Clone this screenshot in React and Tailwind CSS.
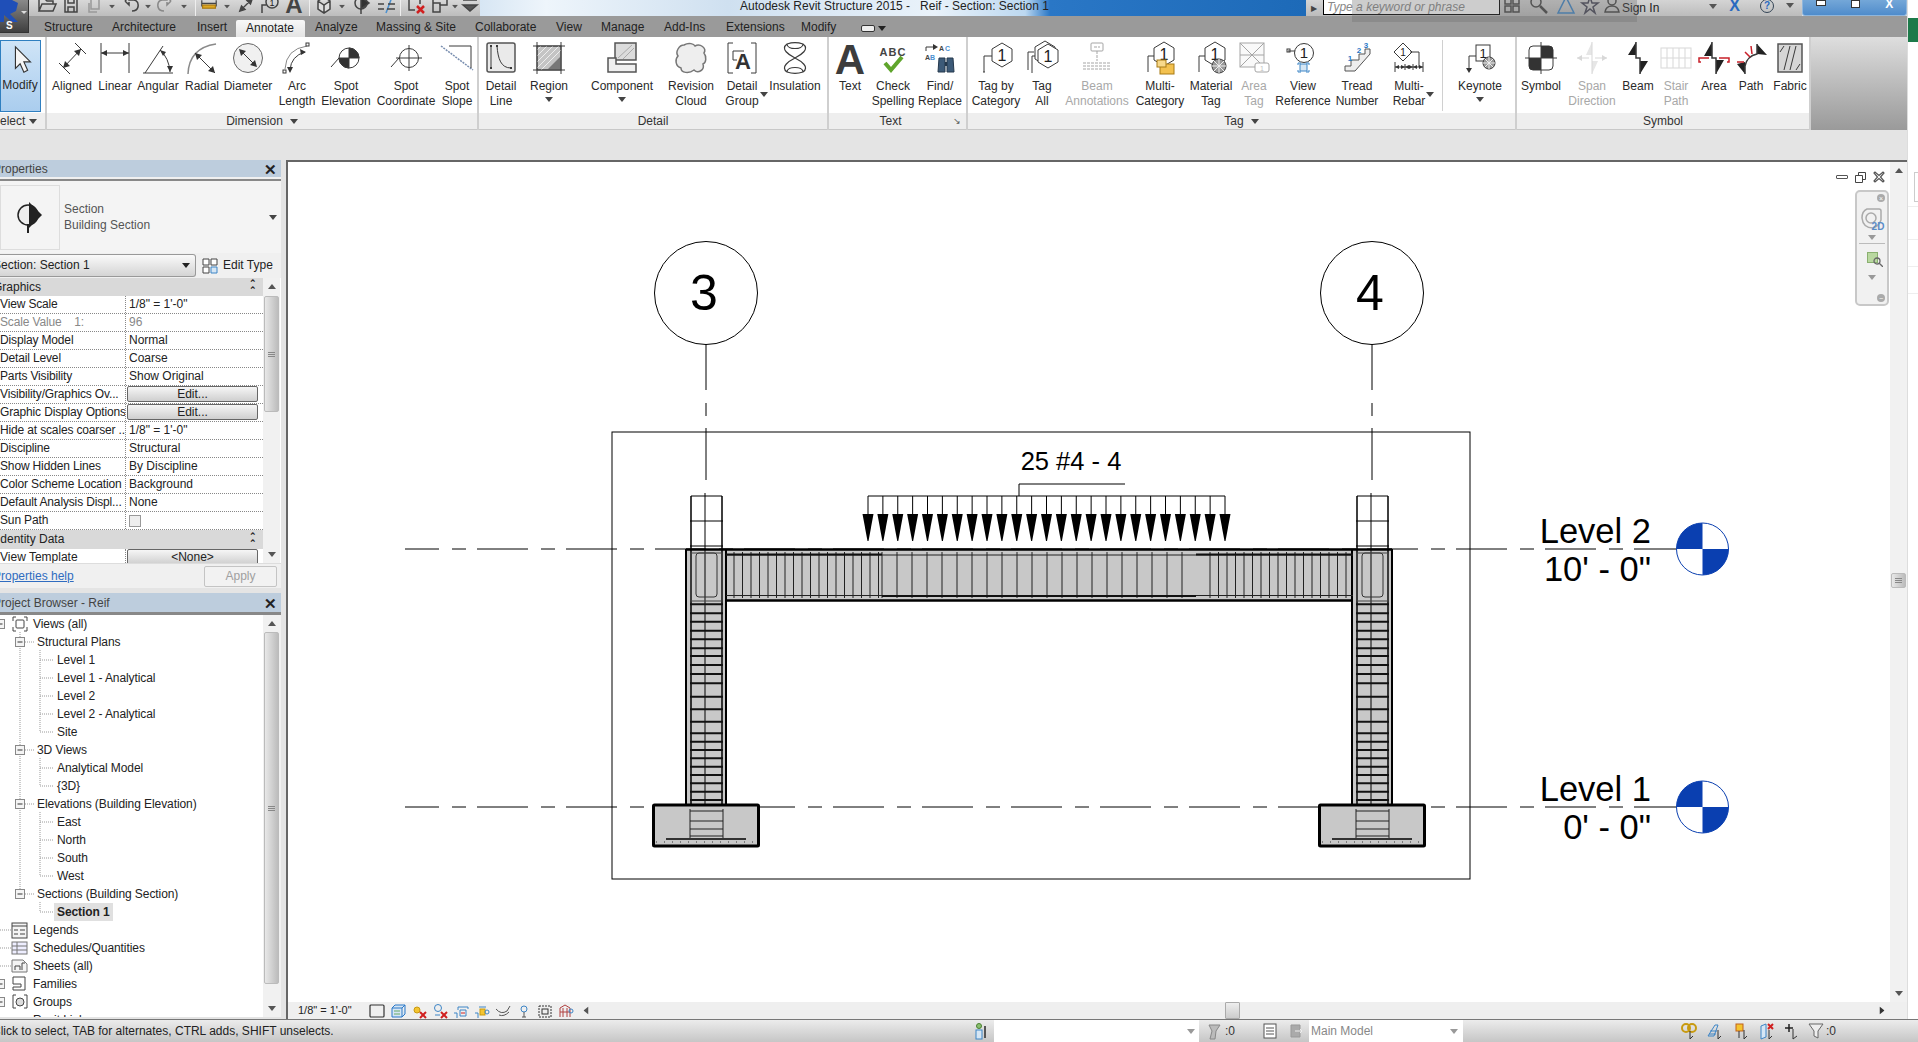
import React from "react";

const range = (from, to, step) => {
  const out = [];
  for (let v = from; v <= to; v += step) out.push(v);
  return out;
};

// small building blocks for the ribbon glyphs
const Head = ({ d }) => <path d={d} fill="#333" stroke="none" />;
const Hex = ({ x = 22, y = 13, n = "1" }) => (
  <g>
    <polygon points={`${x},${y - 12} ${x + 10},${y - 6} ${x + 10},${y + 6} ${x},${y + 12} ${x - 10},${y + 6} ${x - 10},${y - 6}`} fill="#fff" />
    <text x={x} y={y + 6} textAnchor="middle" fontSize="16" fill="#222" stroke="none">{n}</text>
  </g>
);
const Ball = ({ x, y, r = 6 }) => (
  <g>
    <circle cx={x} cy={y} r={r} fill="#999" />
    <path d={`M${x - r} ${y}H${x + r}M${x} ${y - r}V${y + r}M${x - r + 2} ${y - r + 2}L${x + r - 2} ${y + r - 2}M${x + r - 2} ${y - r + 2}L${x - r + 2} ${y + r - 2}`} stroke="#eee" />
  </g>
);
const Folder = ({ x, y }) => (
  <g>
    <rect x={x} y={y} width="14" height="10" fill="#f3c14f" stroke="#a87a14" />
    <rect x={x - 3} y={y - 4} width="9" height="7" fill="#f8d98a" stroke="#a87a14" />
  </g>
);

const ICONS = {
  aligned: (
    <g>
      <path d="M3 21L14 32M19 1L30 12M7 26L25 7" />
      <Head d="M7 26l2-7 5 5zM25 7l-7 2 5 5z" />
    </g>
  ),
  linear: (
    <g>
      <path d="M2 1V31M30 1V31M2 11H30" />
      <Head d="M2 11l6-3v6zM30 11l-6-3v6z" />
    </g>
  ),
  angular: (
    <g>
      <path d="M1 31H31M3 31L21 4M18 8Q27 16 28 30" />
      <Head d="M18 8l6 2-3 4zM28 30l-3-6h6z" />
    </g>
  ),
  radial: (
    <g>
      <path d="M2 32Q3 6 30 2" stroke="#8a8a8a" strokeWidth="1.5" />
      <path d="M9 11L29 31" />
      <Head d="M9 11l7 2-5 5zM29 31l-7-2 5-5z" />
    </g>
  ),
  diameter: (
    <g>
      <circle cx="16" cy="16" r="14.5" fill="#f0f0f0" stroke="#666" />
      <path d="M8 8L24 24" />
      <Head d="M7 7l7 2-5 5zM25 25l-7-2 5-5z" />
    </g>
  ),
  arc: (
    <g>
      <path d="M4 27Q5 7 26 4" stroke="#888" />
      <path d="M9 28Q10 14 24 10" />
      <Head d="M25 10l-6-3 1 6zM9 31l-3-6h6z" />
      <rect x="25" y="1" width="3" height="3" fill="#fff" />
      <rect x="2" y="28" width="3" height="3" fill="#fff" />
    </g>
  ),
  spotElev: (
    <g>
      <path d="M1 25L9 16H29" />
      <circle cx="19" cy="16" r="10" fill="#fff" />
      <path d="M19 6A10 10 0 0 1 29 16H19zM19 26A10 10 0 0 1 9 16H19z" fill="#333" />
    </g>
  ),
  spotCoord: (
    <g>
      <path d="M1 25L9 16" />
      <circle cx="19" cy="16" r="9.5" />
      <path d="M19 3V29M6 16H32" />
    </g>
  ),
  spotSlope: (
    <g>
      <path d="M0 4L32 28" stroke="#7a8fb0" strokeDasharray="2 1" strokeWidth="1.5" />
      <path d="M8 4H30V26" />
    </g>
  ),
  detailLine: (
    <g>
      <rect x="2" y="1" width="28" height="29" rx="2" fill="#eaeaea" stroke="#555" strokeWidth="1.5" />
      <path d="M6 4V26M12 4C13 17 16 26 26 26" />
      <path d="M5 4h2M11 4h2M5 26h2M25 26h2" strokeWidth="2" />
    </g>
  ),
  region: (
    <g>
      <rect x="4" y="4" width="24" height="24" fill="#c4c4c4" />
      <path d="M8 4L4 8M14 4L4 14M20 4L4 20M26 4L4 26M28 8L8 28" stroke="#eee" />
      <path d="M28 14V28H14z" fill="#777" stroke="none" />
      <path d="M0 4H32M0 28H32M4 0V32M28 0V32" />
    </g>
  ),
  component: (
    <g>
      <rect x="9" y="1" width="21" height="17" fill="#dcdcdc" stroke="#555" strokeWidth="1.5" />
      <path d="M2 20V30H30V22H10V16H2z" fill="#efefef" stroke="#555" strokeWidth="1.5" />
      <path d="M12 16L26 3M17 17L28 6" stroke="#aaa" />
    </g>
  ),
  cloud: (
    <path d="M9 3C14 0 19 2 20 4C25 1 32 6 29 11C32 15 31 21 28 22C30 28 23 32 19 28C14 32 6 31 6 26C0 24 0 17 3 14C0 10 4 3 9 3z" fill="#eee" stroke="#777" strokeWidth="1.5" />
  ),
  detailGroup: (
    <g>
      <path d="M7 1H2V31H7M25 1H30V31H25" />
      <path d="M7 9H18" />
      <path d="M7 9V18H11" />
      <text x="17" y="27" textAnchor="middle" fontSize="22" fontWeight="700" fill="#333" stroke="none">A</text>
    </g>
  ),
  insulation: (
    <path d="M8 2C14 0 18 0 24 2C31 7 22 13 16 16C22 19 31 25 24 30C18 32 14 32 8 30C1 25 10 19 16 16C10 13 1 7 8 2z M8 2C8 8 24 8 24 2M8 30C8 24 24 24 24 30" strokeWidth="1.2" />
  ),
  textA: <text x="16" y="32" textAnchor="middle" fontSize="42" fontWeight="700" fill="#3c3c3c" stroke="none">A</text>,
  check: (
    <g>
      <text x="16" y="14" textAnchor="middle" fontSize="11" fontWeight="700" letterSpacing="1" fill="#444" stroke="none">ABC</text>
      <path d="M8 21L14 28L25 15" stroke="#5fa52c" strokeWidth="4" />
    </g>
  ),
  find: (
    <g>
      <path d="M2 9V5H10" />
      <Head d="M14 5l-5-3v6z" />
      <text x="15" y="9" fontSize="7" fontWeight="700" fill="#444" stroke="none">A</text>
      <text x="21" y="9" fontSize="7" fontWeight="700" fill="#4a90d0" stroke="none">C</text>
      <text x="1" y="18" fontSize="7" fontWeight="700" fill="#444" stroke="none">A</text>
      <text x="6" y="18" fontSize="7" fontWeight="700" fill="#4a90d0" stroke="none">B</text>
      <path d="M15 16h6v14h-7zM23 16h6l1 14h-7z" fill="#3c5a78" stroke="#24384c" />
      <path d="M21 20h2v4h-2z" fill="#24384c" stroke="none" />
    </g>
  ),
  tag: (
    <g>
      <path d="M4 30V14H14M3 30h2" />
      <Hex />
    </g>
  ),
  tagAll: (
    <g>
      <path d="M2 28V10H8M6 31V14H12" />
      <Hex x={19} y={11} />
      <Hex x={22} y={14} />
    </g>
  ),
  beamAnno: (
    <g>
      <rect x="10" y="1" width="12" height="8" rx="1" />
      <path d="M13 5h6M16 9v10M2 21H30M2 27H30M2 24H30" strokeDasharray="3 1" />
    </g>
  ),
  multi: (
    <g>
      <path d="M4 30V14H14" />
      <Hex x={20} y={12} />
      <Folder x={16} y={22} />
    </g>
  ),
  material: (
    <g>
      <path d="M4 30V14H14" />
      <Hex x={20} y={12} />
      <Ball x={24} y={24} r={7} />
    </g>
  ),
  area: (
    <g>
      <rect x="2" y="1" width="24" height="24" fill="#f2f2f2" />
      <path d="M2 1L26 25M26 1L2 25M2 13H26" />
      <rect x="17" y="21" width="14" height="9" rx="2" fill="#fff" />
      <text x="24" y="29" textAnchor="middle" fontSize="7" fill="#777" stroke="none">1</text>
    </g>
  ),
  viewRef: (
    <g>
      <path d="M1 9H8" />
      <rect x="0" y="7" width="3" height="3" />
      <circle cx="17" cy="11" r="9.5" fill="#fff" />
      <text x="17" y="16" textAnchor="middle" fontSize="15" fill="#222" stroke="none">1</text>
      <path d="M11 23v-2h3M19 21h3v2M11 28v2h3M19 30h3v-2" stroke="#3d85c6" />
      <rect x="13" y="22" width="7" height="7" fill="#d6e6f4" stroke="#3d85c6" />
    </g>
  ),
  tread: (
    <g>
      <path d="M4 29V24H10V18H18V12H24V7H29V12L14 29z" fill="#eee" stroke="#555" />
      <text x="9" y="19" textAnchor="middle" fontSize="8" fontWeight="700" fill="#2a78c8" stroke="none">1</text>
      <text x="18" y="11" textAnchor="middle" fontSize="8" fontWeight="700" fill="#2a78c8" stroke="none">2</text>
      <text x="25" y="6" textAnchor="middle" fontSize="8" fontWeight="700" fill="#2a78c8" stroke="none">3</text>
    </g>
  ),
  multiRebar: (
    <g>
      <polygon points="10,1 19,10 10,19 1,10" fill="#fff" />
      <text x="10" y="14" textAnchor="middle" fontSize="10" fill="#222" stroke="none">1</text>
      <path d="M17 10H26V25M2 20V30M30 20V30M12 22V28M20 22V28M2 25H30" />
      <Head d="M2 25l4-2v4zM12 25l-4-2v4zM12 25l4-2v4zM20 25l-4-2v4zM20 25l4-2v4zM30 25l-4-2v4z" />
    </g>
  ),
  keynote: (
    <g>
      <path d="M5 28V14H14" />
      <Head d="M5 31l-3-5h6z" />
      <rect x="12" y="3" width="14" height="16" fill="#fff" />
      <text x="19" y="16" textAnchor="middle" fontSize="13" fill="#222" stroke="none">1</text>
      <Ball x={25} y={21} r={6} />
    </g>
  ),
  symbol: (
    <g>
      <rect x="4" y="4" width="24" height="24" rx="4" fill="#fff" />
      <path d="M16 4H24Q28 4 28 8V16H16zM16 28H8Q4 28 4 24V16H16z" fill="#333" stroke="none" />
      <path d="M16 0V32M0 16H32" />
    </g>
  ),
  span: (
    <g stroke="#aaa">
      <path d="M16 0L10 13H16zM16 32L22 19H16z" fill="#c8c8c8" stroke="none" />
      <path d="M16 0V32M1 16H13M19 16H31" />
      <path d="M1 16l5-3v6zM31 16l-5-3v6z" fill="#aaa" stroke="none" />
    </g>
  ),
  beam: (
    <g>
      <path d="M14 0L6 13H14zM18 32L26 19H18z" fill="#222" stroke="none" />
      <path d="M14 0V16H18V32" strokeWidth="1.5" />
    </g>
  ),
  stairPath: (
    <g stroke="#aaa">
      <rect x="1" y="6" width="30" height="20" />
      <path d="M1 16H31M7 6V26M13 6V26M19 6V26M25 6V26" />
    </g>
  ),
  areaSym: (
    <g>
      <path d="M14 0L6 14H14zM18 32L26 18H18z" fill="#222" stroke="none" />
      <path d="M14 0V16H18V32" strokeWidth="1.5" />
      <path d="M11 16H1V20H3M21 16H31V20H29" stroke="#c8202a" strokeWidth="1.5" />
    </g>
  ),
  pathSym: (
    <g>
      <path d="M22 2V12L32 13zM10 32V20L2 22z" fill="#222" stroke="none" />
      <path d="M22 2V12Q12 14 10 24V32" strokeWidth="1.5" />
      <path d="M16 4L17 12M10 10L15 15M2 20H9" stroke="#c8202a" strokeWidth="1.5" />
    </g>
  ),
  fabric: (
    <g>
      <rect x="4" y="2" width="24" height="28" fill="#d6d6d6" stroke="#555" strokeWidth="1.5" />
      <path d="M10 28L16 4M16 28L22 4M6 10L10 4M22 28L26 22" />
    </g>
  ),
};

const Icon = ({ name, faded }) => (
  <svg viewBox="0 0 32 32" fill="none" stroke="#3a3a3a" strokeWidth="1" className={`h-[32px] w-[32px] overflow-visible ${faded ? "opacity-45" : ""}`}>
    {ICONS[name]}
  </svg>
);

const Caret = ({ color = "#444", className = "" }) => (
  <svg viewBox="0 0 8 5" className={`h-[5px] w-[8px] shrink-0 ${className}`}>
    <path d="M0 0H8L4 5z" fill={color} />
  </svg>
);

const RibbonBtn = ({ w, icon, lines, faded, drop }) => (
  <div className={`${w} flex h-full shrink-0 flex-col items-center pt-[5px] text-center`}>
    <Icon name={icon} faded={faded} />
    <div className={`relative mt-[5px] whitespace-nowrap leading-[15px] ${faded ? "text-[#a8a8a8]" : "text-[#2a2a2a]"}`}>
      {lines.map((l) => (
        <div key={l}>{l}</div>
      ))}
      {drop === "below" && <Caret className="mx-auto mt-[3px]" />}
      {drop === "side" && <Caret className="absolute -right-[9px] top-[13px]" />}
    </div>
  </div>
);

const PANELS = [
  {
    w: "w-[432px]", label: "Dimension", caret: true,
    btns: [
      { w: "w-[50px]", icon: "aligned", lines: ["Aligned"] },
      { w: "w-[36px]", icon: "linear", lines: ["Linear"] },
      { w: "w-[50px]", icon: "angular", lines: ["Angular"] },
      { w: "w-[38px]", icon: "radial", lines: ["Radial"] },
      { w: "w-[54px]", icon: "diameter", lines: ["Diameter"] },
      { w: "w-[44px]", icon: "arc", lines: ["Arc", "Length"] },
      { w: "w-[54px]", icon: "spotElev", lines: ["Spot", "Elevation"] },
      { w: "w-[66px]", icon: "spotCoord", lines: ["Spot", "Coordinate"] },
      { w: "w-[36px]", icon: "spotSlope", lines: ["Spot", "Slope"] },
    ],
  },
  {
    w: "w-[350px]", label: "Detail",
    btns: [
      { w: "w-[44px]", icon: "detailLine", lines: ["Detail", "Line"] },
      { w: "w-[52px]", icon: "region", lines: ["Region"], drop: "below" },
      { w: "w-[94px]", icon: "component", lines: ["Component"], drop: "below" },
      { w: "w-[44px]", icon: "cloud", lines: ["Revision", "Cloud"] },
      { w: "w-[58px]", icon: "detailGroup", lines: ["Detail", "Group"], drop: "side" },
      { w: "w-[48px]", icon: "insulation", lines: ["Insulation"] },
    ],
  },
  {
    w: "w-[139px]", label: "Text", corner: true,
    btns: [
      { w: "w-[42px]", icon: "textA", lines: ["Text"] },
      { w: "w-[44px]", icon: "check", lines: ["Check", "Spelling"] },
      { w: "w-[50px]", icon: "find", lines: ["Find/", "Replace"] },
    ],
  },
  {
    w: "w-[549px]", label: "Tag", caret: true,
    btns: [
      { w: "w-[56px]", icon: "tag", lines: ["Tag by", "Category"] },
      { w: "w-[36px]", icon: "tagAll", lines: ["Tag", "All"] },
      { w: "w-[74px]", icon: "beamAnno", lines: ["Beam", "Annotations"], faded: true },
      { w: "w-[52px]", icon: "multi", lines: ["Multi-", "Category"] },
      { w: "w-[50px]", icon: "material", lines: ["Material", "Tag"] },
      { w: "w-[36px]", icon: "area", lines: ["Area", "Tag"], faded: true },
      { w: "w-[62px]", icon: "viewRef", lines: ["View", "Reference"] },
      { w: "w-[46px]", icon: "tread", lines: ["Tread", "Number"] },
      { w: "w-[58px]", icon: "multiRebar", lines: ["Multi-", "Rebar"], drop: "side" },
      { sep: true },
      { w: "w-[66px]", icon: "keynote", lines: ["Keynote"], drop: "below" },
    ],
  },
  {
    w: "w-[294px]", label: "Symbol",
    btns: [
      { w: "w-[48px]", icon: "symbol", lines: ["Symbol"] },
      { w: "w-[54px]", icon: "span", lines: ["Span", "Direction"], faded: true },
      { w: "w-[38px]", icon: "beam", lines: ["Beam"] },
      { w: "w-[38px]", icon: "stairPath", lines: ["Stair", "Path"], faded: true },
      { w: "w-[38px]", icon: "areaSym", lines: ["Area"] },
      { w: "w-[36px]", icon: "pathSym", lines: ["Path"] },
      { w: "w-[42px]", icon: "fabric", lines: ["Fabric"] },
    ],
  },
];

const RibbonPanel = ({ panel }) => (
  <div className={`${panel.w} flex shrink-0 flex-col border-r-2 border-[#cfcfcf]`}>
    <div className="flex h-[76px] bg-white">
      {panel.btns.map((b, i) =>
        b.sep ? (
          <div key={i} className="mx-[4px] mt-[3px] mb-[2px] w-px shrink-0 bg-[#d0d0d0]" />
        ) : (
          <RibbonBtn key={b.icon} {...b} />
        )
      )}
    </div>
    <div className={`relative flex h-[17px] items-center justify-center gap-[7px] border-b border-[#c8c8c8] bg-[#eeeeee] pt-[1px] text-[#333] ${panel.corner ? "pr-[14px]" : ""}`}>
      {panel.label}
      {panel.caret && <Caret />}
      {panel.corner && <span className="absolute right-[5px] bottom-0 text-[9px] text-[#555]">↘</span>}
    </div>
  </div>
);

const TABS = [
  ["Structure", "w-[68px]"], ["Architecture", "w-[85px]"], ["Insert", "w-[49px]"], ["Annotate", "w-[69px]"],
  ["Analyze", "w-[61px]"], ["Massing & Site", "w-[99px]"], ["Collaborate", "w-[81px]"], ["View", "w-[45px]"],
  ["Manage", "w-[63px]"], ["Add-Ins", "w-[62px]"], ["Extensions", "w-[75px]"], ["Modify", "w-[70px]"],
];

const Qs = ({ children, w = "w-[24px]" }) => (
  <svg viewBox="0 0 20 20" fill="none" stroke="#444" strokeWidth="1.5" className={`${w} -mt-[7px] h-[20px] shrink-0`}>
    {children}
  </svg>
);
const QCaret = ({ w }) => (
  <div className={`${w} flex shrink-0 justify-center`}>
    <Caret color="#555" className="-mt-[4px] scale-75" />
  </div>
);
const QSep = ({ w }) => (
  <div className={`${w} flex h-[16px] shrink-0 justify-center`}>
    <div className="h-[16px] w-px bg-[#eee]" />
  </div>
);

const TitleBar = () => (
  <div className="relative flex h-[16px] shrink-0 text-[#222]">
    <div className="flex w-[480px] items-center overflow-hidden bg-gradient-to-b from-[#d8d8d8] to-[#bdbdbd] pl-[35px]">
      <Qs><path d="M2 16V4H8L10 6H16V9M2 16L5 9H19L16 16z" /></Qs>
      <Qs><path d="M4 3H16V17H4zM7 3V8H13V3M7 17V12H13V17" /></Qs>
      <Qs><path d="M6 4H14V14H6zM4 8V17H12" stroke="#999" /></Qs>
      <QCaret w="w-[10px]" />
      <Qs w="w-[28px]"><path d="M4 6L8 2V5H13Q18 6 17 12Q16 16 11 16M4 6L8 10V7" /></Qs>
      <QCaret w="w-[6px]" />
      <Qs w="w-[28px]"><path d="M16 6L12 2V5H7Q2 6 3 12Q4 16 9 16M16 6L12 10V7" stroke="#888" /></Qs>
      <QCaret w="w-[10px]" />
      <QSep w="w-[12px]" />
      <Qs w="w-[16px]"><path d="M1 4V12M19 4V12M1 8H19" /><rect x="2" y="10" width="16" height="4" fill="#e0a820" stroke="#a87a14" /></Qs>
      <QCaret w="w-[20px]" />
      <Qs w="w-[18px]"><path d="M3 17L17 3M3 17l2-6 4 4zM17 3l-6 2 4 4z" fill="#444" /></Qs>
      <Qs w="w-[28px]"><circle cx="13" cy="7" r="6" /><path d="M3 18V10H7" /><text x="13" y="11" fontSize="9" textAnchor="middle" fill="#222" stroke="none">1</text></Qs>
      <span className="-mt-[6px] w-[22px] shrink-0 text-center text-[24px] leading-[20px] font-bold text-[#444]">A</span>
      <QSep w="w-[8px]" />
      <Qs w="w-[22px]"><path d="M4 6L10 2L16 6V14L10 18L4 14zM4 6L10 10L16 6M10 10V18" fill="#ddd" /></Qs>
      <QCaret w="w-[14px]" />
      <Qs w="w-[26px]"><circle cx="9" cy="8" r="6" /><path d="M9 2L17 8L9 14z" fill="#333" /><path d="M9 14V19" /></Qs>
      <Qs w="w-[22px]"><path d="M2 4H8M2 9H8M2 14H8" /><path d="M10 18L16 2" stroke="#4a90d0" /><path d="M12 9H19M11 14H19" /></Qs>
      <QSep w="w-[6px]" />
      <Qs w="w-[26px]"><path d="M3 3H14V9M3 3V15H9" /><path d="M11 11L18 18M18 11L11 18" stroke="#d02020" strokeWidth="2.5" /></Qs>
      <Qs w="w-[22px]"><path d="M3 3H17V10H10V17H3z" /><path d="M3 8H10V10" /></Qs>
      <QCaret w="w-[8px]" />
      <Qs w="w-[22px]"><path d="M3 5H17M3 10L10 16L17 10H3z" fill="#555" /></Qs>
    </div>
    <div className="flex w-[826px] justify-start bg-[linear-gradient(90deg,#d7e6f4_0%,#eef5fb_8%,#cfe0f0_30%,#e9f2fa_55%,#bcd8f0_66%,#2a77c6_69%,#1d6ab8_100%)] pl-[260px] text-[12px] leading-[13px] whitespace-pre">
      Autodesk Revit Structure 2015 -{"   "}Reif - Section: Section 1
    </div>
    <div className="flex w-[496px] items-center overflow-hidden bg-gradient-to-b from-[#d4d4d4] to-[#bcbcbc]">
      <span className="ml-[5px] text-[8px] text-[#444]">▶</span>
      <div className="ml-[6px] h-[16px] w-[177px] shrink-0 -translate-y-[1px] border border-black bg-white px-[3px] text-[12px] leading-[14px] text-[#888] italic">
        Type a keyword or phrase
      </div>
      <Qs w="w-[24px]"><path d="M3 3H9V9H3zM11 3H17V9H11zM3 11H9V17H3zM11 11H17V17H11z" /></Qs>
      <Qs w="w-[30px]"><circle cx="7" cy="7" r="5" /><path d="M11 11L18 18" strokeWidth="2.5" /></Qs>
      <Qs w="w-[24px]"><path d="M10 2L18 18H2z" stroke="#3d85c6" /></Qs>
      <Qs w="w-[24px]"><path d="M10 2L12 8H18L13 12L15 18L10 14L5 18L7 12L2 8H8z" stroke="#445" /></Qs>
      <Qs w="w-[20px]"><circle cx="10" cy="6" r="4" /><path d="M3 17Q4 11 10 11Q16 11 17 17z" /></Qs>
      <span className="shrink-0 text-[12px] leading-[12px] text-[#222]">Sign In</span>
      <Caret color="#555" className="ml-[50px] -mt-[4px]" />
      <span className="ml-[12px] -mt-[4px] text-[16px] leading-[16px] font-bold text-[#2a6ac0]">X</span>
      <div className="ml-[20px] flex h-[16px] items-center">
        <span className="-mt-[5px] flex h-[14px] w-[14px] items-center justify-center rounded-full border border-[#345] text-[10px] font-bold text-[#2a6ac0]">?</span>
        <Caret color="#555" className="ml-[12px] -mt-[5px]" />
      </div>
    </div>
    <div className="flex w-[105px] items-start justify-around rounded-b-[3px] border border-t-0 border-[#8fb6dc] bg-gradient-to-b from-[#74a7d8] to-[#4f8ccb]">
      <span className="h-[6px] w-[10px] border border-[#333] bg-white" />
      <span className="h-[8px] w-[9px] border border-[#333] bg-white" />
      <span className="-mt-[2px] text-[12px] leading-[12px] font-bold text-white">X</span>
    </div>
    {/* translucent popup sliver sitting over the bar */}
    <div className="absolute top-0 left-[1352px] h-[22px] w-[285px] bg-[#707070]/35" />
  </div>
);

const AppButton = () => (
  <div className="absolute top-0 left-0 z-10 h-[33px] w-[29px] border-r border-b border-[#333] bg-gradient-to-b from-[#8a8a8a] to-[#3f3f3f]">
    <svg viewBox="0 0 29 33" className="absolute inset-0 h-[33px] w-[29px]">
      <path d="M0 0H12L18 3L16 11L10 14L18 22H12L4 15V22H0z" fill="#1f4fb8" />
      <path d="M21 11H27L24 14z" fill="#ddd" />
    </svg>
    <span className="absolute bottom-0 left-[6px] text-[10px] leading-[12px] font-bold text-white">S</span>
  </div>
);

const Ribbon = () => (
  <div className="flex h-[93px] shrink-0">
    <div className="flex w-[47px] shrink-0 flex-col border-r-2 border-[#cfcfcf]">
      <div className="h-[76px] bg-white pt-[3px]">
        <div className="flex h-[72px] w-[41px] flex-col items-center border border-[#2f7fc0] bg-gradient-to-b from-[#cfe4f7] to-[#aacdee] pt-[4px]">
          <svg viewBox="0 0 20 32" className="ml-[2px] h-[30px] w-[20px]">
            <path d="M3 2V25L8 20L12 29L16 27L12 18H19z" fill="#f5f5f5" stroke="#333" strokeWidth="1.2" />
          </svg>
          <span className="mt-[3px] -ml-[1px] text-[#2a2a2a]">Modify</span>
        </div>
      </div>
      <div className="flex h-[17px] items-center gap-[4px] overflow-hidden border-b border-[#c8c8c8] bg-[#eeeeee] pt-[1px] text-[#333]">
        <span className="-ml-[8px]">Select</span>
        <Caret />
      </div>
    </div>
    {PANELS.map((p) => (
      <RibbonPanel key={p.label} panel={p} />
    ))}
    <div className="flex-1 bg-gradient-to-b from-[#dedede] to-[#9a9a9a]" />
  </div>
);

const ROWS = [
  ["View Scale", `1/8" = 1'-0"`],
  ["Scale Value    1:", "96", "muted"],
  ["Display Model", "Normal"],
  ["Detail Level", "Coarse"],
  ["Parts Visibility", "Show Original"],
  ["Visibility/Graphics Ov...", "Edit...", "btn"],
  ["Graphic Display Options", "Edit...", "btn"],
  ["Hide at scales coarser ...", `1/8" = 1'-0"`],
  ["Discipline", "Structural"],
  ["Show Hidden Lines", "By Discipline"],
  ["Color Scheme Location", "Background"],
  ["Default Analysis Displ...", "None"],
  ["Sun Path", "", "check"],
];

const EditBtn = ({ label }) => (
  <div className="mx-[1px] flex h-[16px] w-[131px] items-center justify-center rounded-[2px] border-[1.5px] border-[#666] bg-gradient-to-b from-[#f6f6f6] to-[#cfcfcf] text-[#222]">
    {label}
  </div>
);

const ScrollBar = ({ arrows = true, thumbTop, thumbH }) => (
  <div className="relative h-full w-full bg-[#f1f1f1]">
    {arrows && <Caret color="#555" className="absolute top-[6px] left-[5px] rotate-180" />}
    {arrows && <Caret color="#555" className="absolute bottom-[6px] left-[5px]" />}
    <div className={`absolute left-[1px] flex w-[15px] items-center justify-center rounded-[2px] border border-[#bbb] bg-gradient-to-r from-[#e8e8e8] to-[#bcbcbc] ${thumbTop} ${thumbH}`}>
      <span className="block h-[5px] w-[7px] border-y border-[#888] bg-[linear-gradient(#0000_40%,#888_40%,#888_60%,#0000_60%)]" />
    </div>
  </div>
);

const SectionHeader = ({ label, h }) => (
  <div className={`flex ${h} items-center justify-between bg-[#d9d9d9] pr-[6px] font-normal text-[#222]`}>
    <span>{label}</span>
    <span className="text-[9px] leading-[7px] font-bold">
      ⌃<br />⌃
    </span>
  </div>
);

const Properties = () => (
  <div className="flex h-[428px] shrink-0 flex-col bg-[#f0f0f0]">
    <div className="flex h-[17px] items-center justify-between bg-[#bdcddd] pt-[1px] pr-[4px] text-[#444]">
      <span className="-ml-[7px]">Properties</span>
      <span className="text-[15px] leading-none font-bold text-[#222]">✕</span>
    </div>
    <div className="mt-[2px] h-[2px] bg-[#888]" />
    <div className="flex h-[72px] items-center bg-[#f4f4f4] pr-[4px]">
      <div className="flex h-[65px] w-[60px] items-center justify-center border border-[#ddd] bg-[#f4f4f4]">
        <svg viewBox="0 0 30 34" className="h-[34px] w-[30px]">
          <circle cx="13" cy="15" r="10" fill="#eee" stroke="#222" strokeWidth="1.5" />
          <path d="M14 2L27 15L14 28z" fill="#222" />
          <path d="M13 24V33" stroke="#222" strokeWidth="2" />
        </svg>
      </div>
      <div className="ml-[4px] flex-1 leading-[16px] text-[#555]">
        <div>Section</div>
        <div>Building Section</div>
      </div>
      <Caret />
    </div>
    <div className="flex h-[25px] items-center bg-[#f0f0f0]">
      <div className="flex h-[23px] w-[196px] items-center justify-between overflow-hidden rounded-r-[3px] border border-l-0 border-[#999] bg-gradient-to-b from-[#fafafa] to-[#d4d4d4] pr-[5px] text-[#222]">
        <span className="-ml-[7px]">Section: Section 1</span>
        <Caret color="#222" />
      </div>
      <svg viewBox="0 0 16 16" className="ml-[6px] h-[16px] w-[16px]" fill="#fff" stroke="#444">
        <path d="M1 1H7V7H1zM9 1H15V7H9zM1 9H7V15H1z" />
        <path d="M9 9H15V15H9z" fill="#d6e6f4" stroke="#3d85c6" />
      </svg>
      <span className="ml-[5px] text-[#222]">Edit Type</span>
    </div>
    <div className="flex min-h-0 flex-1 bg-white">
      <div className="h-full w-[263px] overflow-hidden">
        <SectionHeader label={<span className="-ml-[7px] block">Graphics</span>} h="h-[18px]" />
        {ROWS.map(([a, b, kind]) => (
          <div key={a} className="flex h-[18px] border-b border-dotted border-[#888]">
            <div className={`w-[126px] shrink-0 overflow-hidden border-r border-dotted border-[#888] leading-[17px] tracking-[-0.15px] whitespace-pre ${kind === "muted" ? "text-[#888]" : "text-[#222]"}`}>
              {a}
            </div>
            {kind === "btn" ? (
              <EditBtn label={b} />
            ) : kind === "check" ? (
              <div className="ml-[3px] mt-[3px] h-[12px] w-[12px] border border-[#999] bg-[#eee]" />
            ) : (
              <div className={`pl-[3px] leading-[17px] ${kind === "muted" ? "text-[#888]" : "text-[#222]"}`}>{b}</div>
            )}
          </div>
        ))}
        <SectionHeader label={<span className="-ml-[3px] block">Identity Data</span>} h="h-[19px]" />
        <div className="flex h-[14px] overflow-hidden">
          <div className="w-[126px] shrink-0 border-r border-dotted border-[#888] leading-[16px] text-[#222]">View Template</div>
          <EditBtn label="<None>" />
        </div>
      </div>
      <div className="w-[17px]">
        <ScrollBar thumbTop="top-[18px]" thumbH="h-[116px]" />
      </div>
    </div>
    <div className="flex h-[25px] items-center justify-between border-t border-[#ddd] bg-[#f0f0f0] pr-[4px]">
      <span className="-ml-[7px] text-[#2f6cc0] underline">Properties help</span>
      <div className="flex h-[21px] w-[73px] items-center justify-center rounded-[2px] border border-[#c4c4c4] bg-[#f2f2f2] text-[#a0a0a0]">Apply</div>
    </div>
  </div>
);

const TREE = [
  { t: "Views (all)", x: "pl-[33px]", icon: "views" },
  { t: "Structural Plans", x: "pl-[37px]" },
  { t: "Level 1", x: "pl-[57px]" },
  { t: "Level 1 - Analytical", x: "pl-[57px]" },
  { t: "Level 2", x: "pl-[57px]" },
  { t: "Level 2 - Analytical", x: "pl-[57px]" },
  { t: "Site", x: "pl-[57px]" },
  { t: "3D Views", x: "pl-[37px]" },
  { t: "Analytical Model", x: "pl-[57px]" },
  { t: "{3D}", x: "pl-[57px]" },
  { t: "Elevations (Building Elevation)", x: "pl-[37px]" },
  { t: "East", x: "pl-[57px]" },
  { t: "North", x: "pl-[57px]" },
  { t: "South", x: "pl-[57px]" },
  { t: "West", x: "pl-[57px]" },
  { t: "Sections (Building Section)", x: "pl-[37px]" },
  { t: "Section 1", x: "pl-[54px]", active: true },
  { t: "Legends", x: "pl-[33px]" },
  { t: "Schedules/Quantities", x: "pl-[33px]" },
  { t: "Sheets (all)", x: "pl-[33px]" },
  { t: "Families", x: "pl-[33px]" },
  { t: "Groups", x: "pl-[33px]" },
  { t: "Revit Links", x: "pl-[33px]" },
];

const PlusBox = ({ x, y }) => (
  <g>
    <rect x={x - 4.5} y={y - 4.5} width="9" height="9" fill="#f4f4f4" stroke="#888" />
    <path d={`M${x - 2.5} ${y}H${x + 2.5}`} stroke="#333" />
  </g>
);

// connector lines and small node icons of the browser tree, y measured from the top of the tree
const TreeLines = () => {
  const r = (i) => 9 + i * 18;
  return (
    <svg className="absolute top-0 left-0 h-[402px] w-[54px]" viewBox="0 0 54 402" fill="none" stroke="#999" strokeDasharray="1 1">
      <path d={`M20 ${r(0) + 8}V${r(15)}`} />
      {[1, 7, 10, 15].map((i) => (
        <path key={i} d={`M25 ${r(i)}H35`} />
      ))}
      <path d={`M40 ${r(1) + 8}V${r(6)}M40 ${r(7) + 8}V${r(9)}M40 ${r(10) + 8}V${r(14)}M40 ${r(15) + 8}V${r(16)}`} />
      {[2, 3, 4, 5, 6, 8, 9, 11, 12, 13, 14, 16].map((i) => (
        <path key={i} d={`M40 ${r(i)}H54`} />
      ))}
      {[17, 18, 19].map((i) => (
        <path key={i} d={`M0 ${r(i)}H11`} />
      ))}
      <g strokeDasharray="none">
        <PlusBox x={20} y={r(1)} />
        <PlusBox x={20} y={r(7)} />
        <PlusBox x={20} y={r(10)} />
        <PlusBox x={20} y={r(15)} />
        <PlusBox x={0} y={r(0)} />
        <PlusBox x={0} y={r(20)} />
        <PlusBox x={0} y={r(21)} />
        <g stroke="#444">
          <path d={`M13 ${r(0) - 3}v-4h3M24 ${r(0) - 7}h3v4M13 ${r(0) + 3}v4h3M24 ${r(0) + 7}h3v-4`} />
          <rect x="16" y={r(0) - 4} width="8" height="8" rx="1" />
          <rect x="12" y={r(17) - 7} width="15" height="15" fill="#f4f4f4" />
          <path d={`M12 ${r(17) - 4}H27M14 ${r(17)}H18M20 ${r(17)}H25M14 ${r(17) + 4}H18M20 ${r(17) + 4}H25`} />
          <rect x="12" y={r(18) - 6} width="15" height="12" fill="#eef" stroke="#777" />
          <path d={`M12 ${r(18) - 2}H27M12 ${r(18) + 2}H27M17 ${r(18) - 6}V${r(18) + 6}`} stroke="#777" />
          <path d={`M12 ${r(19) - 6}H23L27 ${r(19) - 2}V${r(19) + 6}H12z`} fill="#f4f4f4" stroke="#777" />
          <path d={`M15 ${r(19) + 4}V${r(19)}H20V${r(19) + 4}M22 ${r(19) + 4}V${r(19) - 3}H25`} />
          <path d={`M13 ${r(20) - 7}H25V${r(20) + 6}H13V${r(20) + 3}H21V${r(20)}H13z`} fill="#fff" />
          <path d={`M16 ${r(21) - 7}H13V${r(21) + 6}H16M24 ${r(21) - 7}H27V${r(21) + 6}H24`} />
          <circle cx="20" cy={r(21)} r="4" fill="#ddd" />
        </g>
      </g>
    </svg>
  );
};

const Browser = () => (
  <div className="flex h-[424px] shrink-0 flex-col overflow-hidden bg-white">
    <div className="flex h-[19px] shrink-0 items-center justify-between bg-[#bdcddd] pt-[1px] pr-[4px] text-[#444]">
      <span className="-ml-[7px]">Project Browser - Reif</span>
      <span className="text-[15px] leading-none font-bold text-[#222]">✕</span>
    </div>
    <div className="h-[3px] shrink-0 bg-[#888]" />
    <div className="flex min-h-0 flex-1">
      <div className="relative w-[263px] overflow-hidden tracking-[-0.08px] text-[#222]">
        <TreeLines />
        {TREE.map((n) => (
          <div key={n.t} className={`h-[18px] leading-[18px] ${n.x}`}>
            <span className={n.active ? "inline-block bg-[#e0e0e0] px-[3px] font-bold" : ""}>{n.t}</span>
          </div>
        ))}
      </div>
      <div className="w-[18px]">
        <ScrollBar thumbTop="top-[17px]" thumbH="h-[352px]" />
      </div>
    </div>
  </div>
);

const STIRRUPS = [553, 580, 605, 632, 658, 685, 708, 735, 762, 790, 830, 868, 905, 940, 965, 990, 1015, 1040, 1065, 1090, 1115, 1140].map((v) => 420 + v / 3);
const BEAM_LINES = [...range(734, 880, 8.5), ...range(882, 1196, 15), ...range(1210, 1350, 8.5)];
const TICKS = Array.from({ length: 25 }, (_, i) => 868 + i * 14.875);

const Column = ({ cx }) => {
  const l = cx - 20;
  const r = cx + 20;
  const a = cx - 15;
  const b = cx + 16;
  return (
    <g>
      <rect x={l} y={601} width={40} height={204} fill="#c8c8c8" />
      <path d={`M${l} 549V805M${r} 549V805`} stroke="#000" strokeWidth="2" />
      <path d={`M${a} 496V805M${b} 496V805`} stroke="#000" strokeWidth="1.5" />
      <path d={`M${cx - 1} 493V838`} stroke="#000" />
      <path d={`M${a} 496H${b}M${a - 1} 521H${b + 1}M${a - 1} 546H${b + 1}`} stroke="#000" />
      {STIRRUPS.map((y) => (
        <path key={y} d={`M${a - 1} ${y}H${b + 1}`} stroke="#111" strokeWidth="2" />
      ))}
      <rect x={cx - 10} y={553} width={21} height={44} rx={3} fill="none" stroke="#333" />
      <rect x={cx - 15} y={553} width={31} height={48} fill="none" stroke="#444" />
      <rect x={cx - 52.5} y={805} width={105} height={41} rx={1} fill="#c8c8c8" stroke="#000" strokeWidth="3" />
      <path d={`M${a - 1} 809V838M${b + 1} 809V838M${a - 1} 811H${b + 1}M${a - 1} 821H${b + 1}M${a - 1} 829H${b + 1}M${a - 1} 836H${b + 1}`} stroke="#222" />
      <path d={`M${cx - 40} 839H${cx + 40}`} stroke="#000" strokeWidth="1.5" />
      <path d={`M${cx - 50} 842H${cx + 50}`} stroke="#333" strokeDasharray="1 7" />
    </g>
  );
};

const LevelHead = ({ y, name, elev }) => (
  <g>
    <text x="1651" y={y - 6} textAnchor="end" fontSize="34.5">{name}</text>
    <text x="1651" y={y + 32} textAnchor="end" fontSize="34.5">{elev}</text>
    <circle cx="1702.5" cy={y} r="26" fill="#fff" stroke="#0a3fb0" />
    <path d={`M1702.5 ${y}V${y - 26}A26 26 0 0 0 1676.5 ${y}zM1702.5 ${y}V${y + 26}A26 26 0 0 0 1728.5 ${y}z`} fill="#0a3fb0" />
  </g>
);

const GridBubble = ({ cx, n }) => (
  <g>
    <circle cx={cx} cy="293" r="51.5" fill="none" stroke="#000" />
    <text x={cx - 2} y="310" textAnchor="middle" fontSize="50">{n}</text>
    <path d={`M${cx} 344V390M${cx} 403V416M${cx} 428V480`} stroke="#000" />
  </g>
);

// the section view itself; the viewBox uses page coordinates so it lines up with the measurements
const Drawing = () => (
  <svg viewBox="288 162 1602 839" className="block h-[839px] w-[1602px]" style={{ fontFamily: "'Liberation Sans', sans-serif" }}>
    <rect x="612" y="432" width="858" height="447" fill="none" stroke="#000" />
    {[549, 807].map((y) => (
      <path key={y} d={`M405 ${y}H1676`} stroke="#000" strokeDasharray="51 13 14 11" strokeDashoffset="17" />
    ))}
    <GridBubble cx={706} n="3" />
    <GridBubble cx={1372} n="4" />
    <rect x="686" y="549" width="706" height="52" fill="#c8c8c8" />
    <Column cx={706} />
    <Column cx={1372} />
    <path d="M686 549.5H1392" stroke="#000" strokeWidth="2.5" />
    <path d="M726 600.5H1353" stroke="#000" strokeWidth="2.5" />
    <path d="M726 555H1353M726 595.5H1353" stroke="#222" />
    {BEAM_LINES.map((x) => (
      <path key={x} d={`M${x} 552V598`} stroke="#222" />
    ))}
    <path d="M726 554.5H882M1196 554.5H1353M882 596H1196" stroke="#111" strokeWidth="2" />
    <text x="1071" y="470" textAnchor="middle" fontSize="25.5">25 #4 - 4</text>
    <path d="M868 496H1225M1019 496V484H1125" fill="none" stroke="#000" />
    {TICKS.map((x) => (
      <g key={x}>
        <path d={`M${x} 496V516`} stroke="#000" />
        <path d={`M${x - 5.5} 514H${x + 5.5}L${x + 0.5} 541H${x - 0.5}z`} fill="#000" />
      </g>
    ))}
    <LevelHead y={549} name="Level 2" elev={`10' - 0"`} />
    <LevelHead y={807} name="Level 1" elev={`0' - 0"`} />
  </svg>
);

const ViewGlyph = ({ children }) => (
  <svg viewBox="0 0 16 16" fill="none" stroke="#333" className="h-[16px] w-[16px] shrink-0">
    {children}
  </svg>
);

const ViewBar = () => (
  <div className="flex h-[17px] shrink-0 items-center bg-[#efefef]">
    <div className="flex w-[1602px] items-center text-[11px]">
      <span className="w-[81px] pl-[10px] whitespace-nowrap text-[#222]">1/8" = 1'-0"</span>
      <div className="flex items-center gap-[5px]">
        <ViewGlyph><rect x="1" y="2" width="14" height="12" rx="1" strokeWidth="1.2" /></ViewGlyph>
        <ViewGlyph><path d="M2 5H12V14H2zM2 5L5 2H15L12 5M15 2V11L12 14" stroke="#2a78c8" fill="#d6e6f4" /><path d="M4 8H10M4 11H10" stroke="#6a6" /></ViewGlyph>
        <ViewGlyph><circle cx="6" cy="7" r="3" fill="#f4c430" stroke="#c89a10" /><path d="M9 9L15 15M15 9L9 15" stroke="#d02020" strokeWidth="2" /></ViewGlyph>
        <ViewGlyph><circle cx="6" cy="5" r="3.5" stroke="#3d85c6" /><path d="M3 12H8" stroke="#3d85c6" /><path d="M9 9L15 15M15 9L9 15" stroke="#d02020" strokeWidth="2" /></ViewGlyph>
        <ViewGlyph><path d="M1 10H4V15M5 4H15V6M5 4V7M7 7H13V13H7z" stroke="#3d85c6" /><path d="M8 10H12" stroke="#d02020" /></ViewGlyph>
        <ViewGlyph><path d="M1 10H4V15M5 4H12" stroke="#3d85c6" /><rect x="6" y="6" width="5" height="6" fill="#f4c430" stroke="#c89a10" /><circle cx="13" cy="9" r="2" stroke="#3d85c6" /></ViewGlyph>
        <ViewGlyph><path d="M1 6Q6 12 12 8L15 3M4 12Q9 14 14 9" stroke="#555" /></ViewGlyph>
        <ViewGlyph><circle cx="8" cy="6" r="3" stroke="#3d85c6" /><path d="M8 9V14M6 14H10" stroke="#555" /></ViewGlyph>
        <ViewGlyph><rect x="2" y="3" width="12" height="11" strokeDasharray="2 1" /><rect x="5" y="6" width="6" height="5" /></ViewGlyph>
        <ViewGlyph><path d="M2 14V5L7 2L12 5V14M5 5V14M9 5V14M2 9H12" stroke="#b04040" /><circle cx="13" cy="8" r="2" stroke="#3d85c6" /></ViewGlyph>
      </div>
      <Caret color="#555" className="ml-[8px] rotate-90" />
      <div className="ml-[635px] h-[17px] w-[15px] rounded-[1px] border border-[#aaa] bg-gradient-to-b from-[#eee] to-[#ccc]" />
      <Caret color="#333" className="ml-[638px] -rotate-90" />
    </div>
    <div className="flex-1" />
  </div>
);

const NavBar = () => (
  <div className="absolute top-[28px] right-[18px] flex h-[116px] w-[34px] flex-col items-center rounded-[5px] border-2 border-[#c8c8c8] bg-[#f1f1f1] pt-[14px]">
    <span className="absolute top-[2px] right-[2px] flex h-[8px] w-[8px] items-center justify-center rounded-full bg-[#aaa] text-[7px] leading-none text-white">×</span>
    <svg viewBox="0 0 26 26" className="h-[26px] w-[26px]" fill="none" stroke="#aaa" strokeWidth="1.5">
      <path d="M8 3H20Q22 3 22 5V14Q20 20 14 22Q4 22 3 12Q3 5 8 3z" />
      <circle cx="12" cy="12" r="5" />
    </svg>
    <span className="-mt-[11px] ml-[12px] text-[10px] leading-[11px] font-bold text-[#5b8cc8]">2D</span>
    <Caret color="#999" className="mt-[3px]" />
    <div className="mt-[3px] h-px w-[26px] bg-[#bbb]" />
    <div className="relative mt-[8px] h-[11px] w-[11px] border border-[#8ab070] bg-[#b9d8a0]">
      <svg viewBox="0 0 10 10" className="absolute -right-[6px] -bottom-[5px] h-[10px] w-[10px]" fill="none" stroke="#666" strokeWidth="1.3">
        <circle cx="4" cy="4" r="3" />
        <path d="M6 6L10 10" />
      </svg>
    </div>
    <Caret color="#999" className="mt-[12px]" />
    <span className="absolute right-[2px] bottom-[2px] flex h-[8px] w-[8px] items-center justify-center rounded-full bg-[#aaa] text-[7px] leading-none text-white">−</span>
  </div>
);

const DocControls = () => (
  <div className="absolute top-[9px] right-[22px] flex items-center gap-[7px]">
    <span className="h-[4px] w-[12px] rounded-[1px] border border-[#555] bg-white" />
    <svg viewBox="0 0 11 11" className="h-[11px] w-[11px]" fill="#fff" stroke="#444">
      <path d="M3.5 .5H10.5V7.5H3.5z" />
      <path d="M.5 3.5H7.5V10.5H.5z" />
    </svg>
    <svg viewBox="0 0 12 12" className="h-[12px] w-[12px]" fill="none" stroke="#555" strokeWidth="1.2">
      <path d="M1 2L2 1L6 4.5L10 1L11 2L7.5 6L11 10L10 11L6 7.5L2 11L1 10L4.5 6z" />
    </svg>
  </div>
);

const Canvas = () => (
  <div className="flex min-w-0 flex-1 flex-col border-t-2 border-l-2 border-[#666] bg-white">
    <div className="relative flex min-h-0 flex-1">
      <div className="w-[1602px] overflow-hidden">
        <Drawing />
      </div>
      <div className="flex-1">
        <ScrollBar thumbTop="top-[411px]" thumbH="h-[15px]" />
      </div>
      <DocControls />
      <NavBar />
    </div>
    <ViewBar />
  </div>
);

const StatusIcon = ({ children, w = "w-[26px]" }) => (
  <svg viewBox="0 0 18 18" fill="none" stroke="#555" className={`${w} h-[18px] shrink-0`}>
    {children}
  </svg>
);

const StatusBar = () => (
  <div className="flex h-[23px] shrink-0 items-center overflow-hidden border-t border-[#777] bg-gradient-to-b from-[#ececec] to-[#c6c6c6] text-[#222]">
    <div className="w-[970px] shrink-0 overflow-hidden">
      <span className="-ml-[8px] block whitespace-nowrap">Click to select, TAB for alternates, CTRL adds, SHIFT unselects.</span>
    </div>
    <StatusIcon w="w-[24px]">
      <rect x="3" y="8" width="6" height="9" fill="#d6e6f4" stroke="#3d85c6" />
      <circle cx="6" cy="4" r="2.5" fill="#8ac070" stroke="#4a8030" />
      <path d="M12 4V16" strokeWidth="2" />
    </StatusIcon>
    <div className="flex h-[22px] w-[205px] items-center justify-end bg-white pr-[4px]">
      <Caret color="#999" />
    </div>
    <div className="w-[4px]" />
    <StatusIcon w="w-[22px]"><path d="M5 17L7 9L4 3H15L11 9L10 17z" fill="#bbb" stroke="#888" /></StatusIcon>
    <span className="w-[18px] text-[12px] text-[#333]">:0</span>
    <div className="w-[14px]" />
    <StatusIcon><rect x="3" y="2" width="12" height="14" fill="#fff" /><path d="M5 6H13M5 9H13M5 12H13" /></StatusIcon>
    <StatusIcon><path d="M4 3H13V15H4z" fill="#aaa" stroke="#999" /><path d="M8 9H15M13 7L15 9L13 11" stroke="#eee" /></StatusIcon>
    <div className="flex h-[22px] w-[154px] items-center justify-between bg-white pr-[5px] pl-[2px] text-[#888]">
      Main Model
      <Caret color="#999" />
    </div>
    <div className="w-[213px]" />
    <StatusIcon><circle cx="6" cy="6" r="4" stroke="#c89a10" strokeWidth="2" /><circle cx="12" cy="6" r="4" stroke="#c89a10" strokeWidth="2" /><path d="M10 9V17L13 14" stroke="#333" /></StatusIcon>
    <StatusIcon><path d="M2 14L9 3H12L8 14zM4 9H11M3 12H10" stroke="#3d85c6" /><path d="M12 8V17L15 14" stroke="#333" /></StatusIcon>
    <StatusIcon><rect x="4" y="2" width="7" height="7" fill="#f4c430" stroke="#c0601a" /><path d="M7 9V16M12 8V17L15 14" stroke="#333" /></StatusIcon>
    <StatusIcon><path d="M3 4L8 2V15L3 17z" fill="#d6e6f4" stroke="#3d85c6" /><path d="M10 2L15 7M15 2L10 7" stroke="#d02020" strokeWidth="2" /><path d="M11 8V17L14 14" stroke="#333" /></StatusIcon>
    <StatusIcon><path d="M5 2V10M1 6H9" stroke="#222" strokeWidth="1.5" /><path d="M9 7V17L13 14" stroke="#333" /></StatusIcon>
    <StatusIcon w="w-[20px]"><path d="M2 2H16L11 9V16L7 14V9z" fill="#eee" stroke="#666" /></StatusIcon>
    <span className="text-[12px] text-[#333]">:0</span>
  </div>
);

export default function App() {
  return (
    <div className="flex h-[1042px] w-[1918px] flex-col overflow-hidden bg-white text-[12px] leading-[15px] [font-family:'Liberation_Sans',sans-serif]">
      <div className="flex min-h-0 flex-1">
        <div className="relative flex w-[1907px] shrink-0 flex-col bg-[#e4e4e4]">
          <TitleBar />
          <div className="flex h-[21px] shrink-0 items-end bg-[#9a9a9a] pl-[34px] text-[#222]">
            {TABS.map(([name, w]) => (
              <div
                key={name}
                className={`${w} shrink-0 pb-[2px] pl-[10px] ${name === "Annotate" ? "h-[17px] rounded-t-[2px] bg-gradient-to-b from-[#f8f8f8] to-[#e4e4e4] pt-[1px]" : ""}`}
              >
                {name}
              </div>
            ))}
            <div className="mb-[5px] h-[7px] w-[14px] rounded-[2px] border border-[#333] bg-[#eee]" />
            <Caret color="#222" className="mb-[6px] ml-[3px]" />
          </div>
          <AppButton />
          <Ribbon />
          <div className="h-[30px] shrink-0" />
          <div className="flex min-h-0 flex-1">
            <div className="flex w-[281px] shrink-0 flex-col overflow-hidden">
              <Properties />
              <div className="h-[5px] shrink-0" />
              <Browser />
            </div>
            <div className="w-[5px] shrink-0" />
            <Canvas />
          </div>
        </div>
        <div className="flex flex-1 flex-col border-l border-[#ddd] bg-white">
          <div className="mt-[18px] h-[24px] bg-[#1d7a4a]" />
          <div className="mt-[130px] ml-[6px] h-[30px] border border-r-0 border-[#ccc]" />
          <div className="mt-[4px] h-px bg-[#eee]" />
          <div className="mt-[32px] h-px bg-[#eee]" />
          <div className="mt-[26px] h-px bg-[#eee]" />
          <div className="mt-[26px] h-px bg-[#eee]" />
        </div>
      </div>
      <StatusBar />
    </div>
  );
}
